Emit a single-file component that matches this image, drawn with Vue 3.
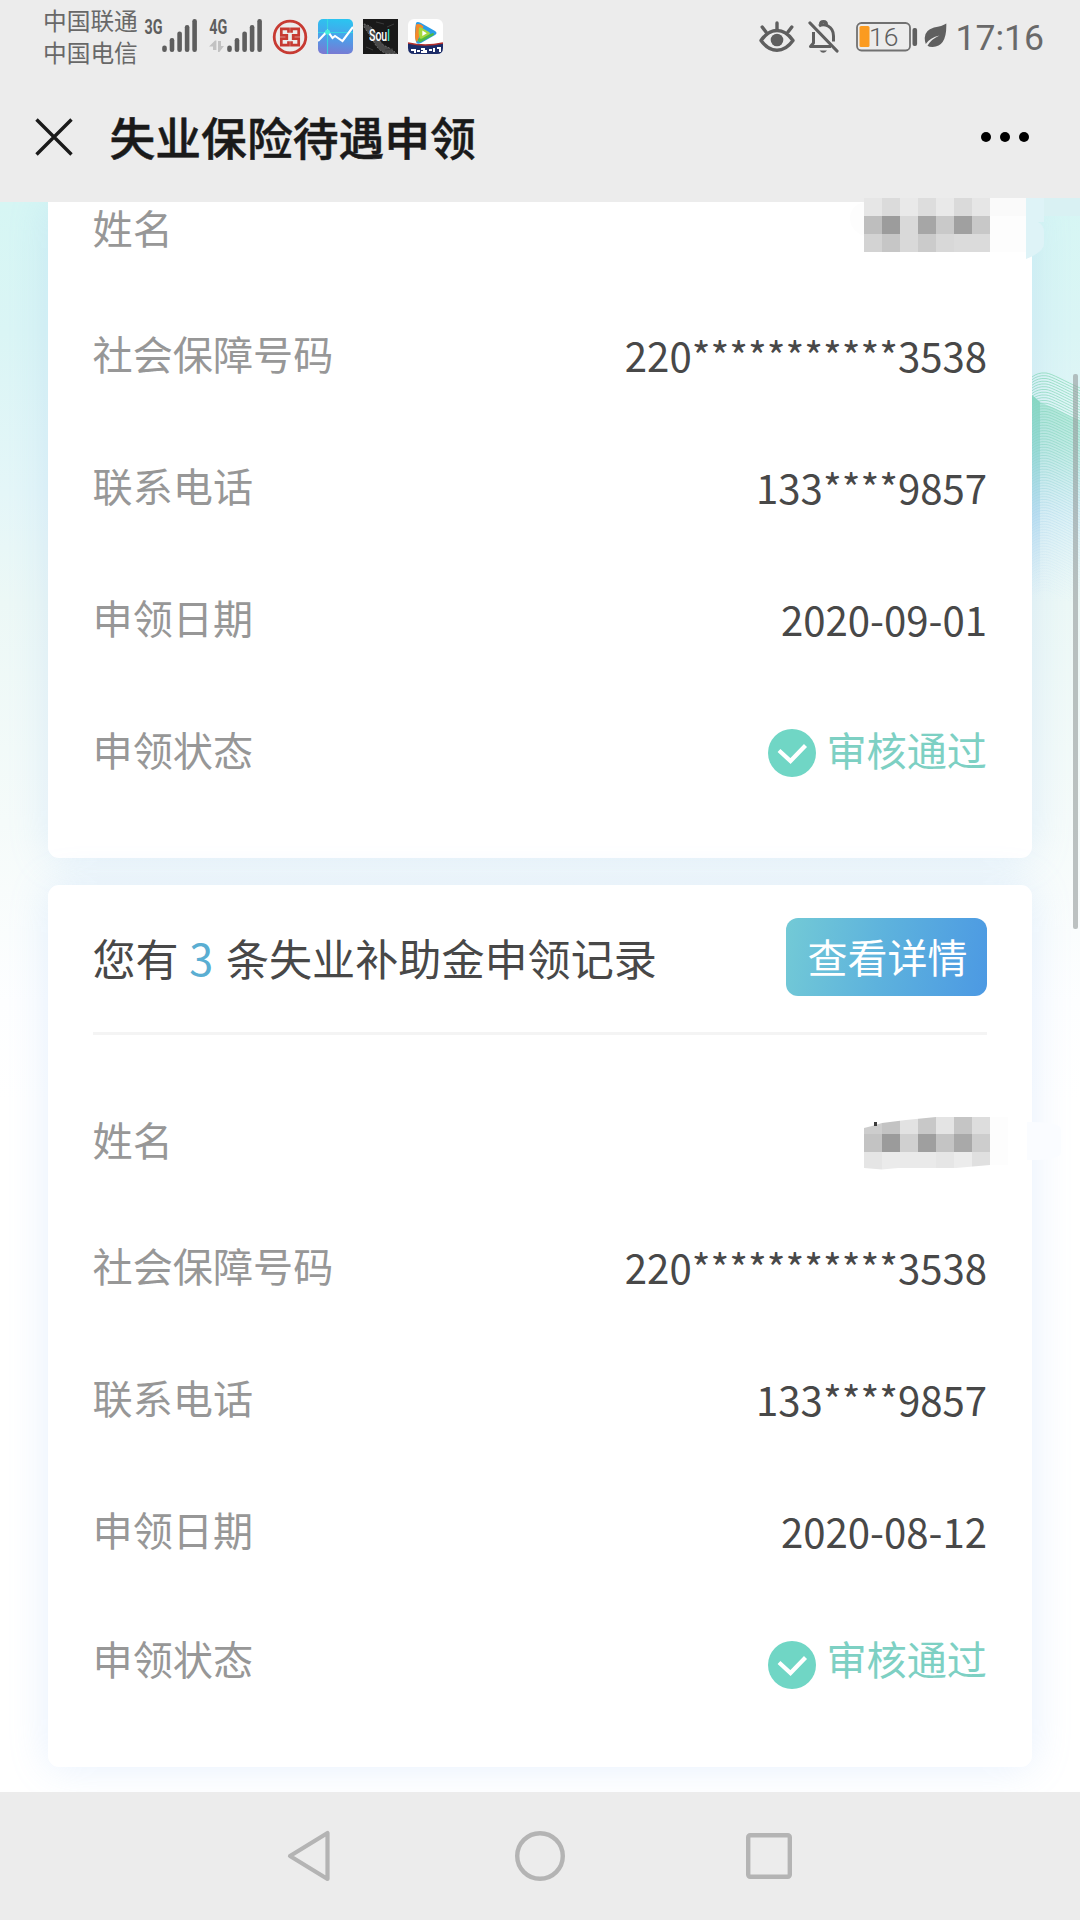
<script setup>
const rows1 = [
  { label: '姓名', kind: 'name' },
  { label: '社会保障号码', value: '220***********3538' },
  { label: '联系电话', value: '133****9857' },
  { label: '申领日期', value: '2020-09-01' },
  { label: '申领状态', kind: 'state', value: '审核通过' },
]
const rows2 = [
  { label: '姓名', kind: 'name' },
  { label: '社会保障号码', value: '220***********3538' },
  { label: '联系电话', value: '133****9857' },
  { label: '申领日期', value: '2020-08-12' },
  { label: '申领状态', kind: 'state', value: '审核通过' },
]
const cards = [
  { id: 'first', rows: rows1 },
  { id: 'second', rows: rows2, count: 3 },
]

const mosaicA = [
  ['#e6e6e6', '#dbdbdb', '#e9e9e9', '#dddddd', '#e9e9e9', '#dadada', '#e6e6e6'],
  ['#bebebe', '#9c9c9c', '#d9d9d9', '#a6a6a6', '#c9c9c9', '#a0a0a0', '#c8c8c8'],
  ['#d3d3d3', '#c6c6c6', '#d9d9d9', '#cbcbcb', '#d8d8d8', '#dbdbdb', '#dbdbdb'],
]
const mosaicB = [
  ['#cdcdcd', '#c3c3c3', '#e2e2e2', '#c8c8c8', '#e4e4e4', '#c5c5c5', '#dddddd'],
  ['#c3c3c3', '#9b9b9b', '#d0d0d0', '#9f9f9f', '#c4c4c4', '#a9a9a9', '#cdcdcd'],
  ['#e5e5e5', '#ebebeb', '#eaeaea', '#eaeaea', '#e6e6e6', '#ececec', '#e0e0e0'],
]

const waves = Array.from({ length: 80 }, (_, i) => {
  const y = 1 + i * 2.75
  return `M0 ${y + 4} C4 ${y + 1} 8 ${y - 0.5} 14 ${y} S34 ${y + 9} 48 ${y + 15}`
})
const bars = [
  { x: 0.2, y: 26.5 },
  { x: 7.7, y: 19 },
  { x: 15.3, y: 12.5 },
  { x: 22.8, y: 6 },
  { x: 30.3, y: 0 },
]
</script>

<template>
  <div class="screen">
    <header class="status">
      <div class="carriers">
        <span>中国联通</span>
        <span>中国电信</span>
      </div>
      <svg class="sig3" width="54" height="36" viewBox="0 0 54 36">
        <text x="0.5" y="14.8" class="net" textLength="18" lengthAdjust="spacingAndGlyphs">3G</text>
        <rect v-for="b in bars" :key="b.x" :x="b.x + 18" :y="b.y" width="4.6" :height="33 - b.y" rx="2.2" fill="#5e5e5e" />
      </svg>
      <svg class="sig4" width="54" height="36" viewBox="0 0 54 36">
        <text x="0.3" y="14.8" class="net" textLength="18" lengthAdjust="spacingAndGlyphs">4G</text>
        <path d="M0 27.500 6 21.500h1.400V31H4v-3.500zM9 22h3v5h3l-4.600 6H9z" fill="#c2c2c2" />
        <rect v-for="b in bars" :key="b.x" :x="b.x + 18" :y="b.y" width="4.6" :height="33 - b.y" rx="2.2" fill="#5e5e5e" />
      </svg>
      <svg class="app bank" width="36" height="36" viewBox="0 0 36 36">
        <circle cx="18" cy="18" r="15.8" fill="none" stroke="#c73a32" stroke-width="2.8" />
        <g fill="none" stroke="#c73a32" stroke-width="2.7">
          <path d="M16.500 13.800V9.800H9.300V16.300H14.800V19.700H9.300V26.200H16.500V22.200" />
          <path d="M19.500 13.800V9.800H26.700V16.300H21.200V19.700H26.700V26.200H19.500V22.200" />
        </g>
      </svg>
      <svg class="app" width="35" height="35" viewBox="0 0 35 35">
        <defs>
          <linearGradient id="stock" x1="0.4" y1="0" x2="0.3" y2="1">
            <stop offset="0" stop-color="#2cc3f0" />
            <stop offset="0.5" stop-color="#4aa0ea" />
            <stop offset="1" stop-color="#7a78d2" />
          </linearGradient>
        </defs>
        <rect width="35" height="35" rx="5" fill="url(#stock)" />
        <path d="M9.500 0v35M0 13.500h35" stroke="#35dfe0" stroke-width="1.200" stroke-opacity="0.8" />
        <path d="M0 22 9.500 12l5 7 2.500-2 7.500 5L35 8" fill="none" stroke="#fff" stroke-width="2.100" />
        <circle cx="9.500" cy="13" r="2.500" fill="#43f0dd" />
      </svg>
      <div class="app soul">
        <svg width="35" height="35" viewBox="0 0 35 35">
          <rect width="35" height="35" fill="#191919" />
          <path d="M1 5q9 2 12 10t9 12q6 2 12 8H24q-8-3-12-10T1 8z" fill="#4a4a4a" stroke="#8a8a8a" stroke-width="0.8" stroke-dasharray="1.500 2" />
          <path d="M13 3l8 2M24 8l7-3M3 28l7 3M22 31l8-1" stroke="#3b3b3b" stroke-width="1" />
        </svg>
        <span>Sou<i>l</i></span>
      </div>
      <svg class="app" width="35" height="35" viewBox="0 0 35 35">
        <rect width="35" height="35" rx="6" fill="#fff" />
        <path d="M0 24q17 4 35 0v5q0 6-6 6H6q-6 0-6-6z" fill="#1c2c68" />
        <path d="M0 24q17 4 35 0" fill="none" stroke="#b4302c" stroke-width="1.600" />
        <path d="M3 31h3M7 30v4M9 32h3M13 30h3v3h-3M18 31v3M21 31h3M26 29v4M29 29h3v4" fill="none" stroke="#fff" stroke-width="2" />
        <path d="M8 4q1-2 5 0l14 8q3 2 0 4l-14 8q-4 2-5-1-2-9 0-19z" fill="#2a9de8" />
        <path d="M8 5.500q4-1.500 7.500 2L9 23q-2-1-2-7z" fill="#f48a2b" />
        <path d="M10 20 25 14q2 1 0 2.500L13 23q-3 1-3-3z" fill="#4fb944" />
        <path d="M11 9q1-1.500 3 0l7 4q2 1.300 0 2.500l-7 4q-2 1-2.600-1Q10 14 11 9z" fill="#a5d83c" />
        <path d="m14.300 11.500 4.500 2.800-4.500 2.800z" fill="#fff" />
      </svg>

      <div class="sys">
        <svg class="eye" width="36" height="34" viewBox="0 0 36 34">
          <path d="M2 20.500Q9 10.500 18 10.500T34 20.500Q27 30.300 18 30.300T2 20.500z" fill="none" stroke="#5f5f5f" stroke-width="3.400" stroke-linejoin="round" />
          <circle cx="18" cy="20" r="6.300" fill="#5f5f5f" />
          <path d="M18 10V3M7 12 3.200 7M29 12l3.800-5" stroke="#5f5f5f" stroke-width="3.400" stroke-linecap="round" />
        </svg>
        <svg class="bell" width="32" height="34" viewBox="0 0 32 34">
          <path d="M2 3 29 31" stroke="#5f5f5f" stroke-width="3.200" stroke-linecap="round" />
          <path d="M5.500 12v11L2.500 26.500H23M11 6q4-2.500 9 0 5.500 3 5.500 10v5.500M12.500 4q0-2.500 3-2.500t3 3" fill="none" stroke="#5f5f5f" stroke-width="3" stroke-linejoin="round" />
          <path d="M11.500 30.500h7.500q-3.700 4.500-7.500 0z" fill="#5f5f5f" />
        </svg>
        <svg class="battery" width="62" height="30" viewBox="0 0 62 30">
          <rect x="1" y="1" width="53" height="27.500" rx="4.500" fill="none" stroke="#717171" stroke-width="1.800" />
          <rect x="3.500" y="4" width="10" height="21" rx="1.500" fill="#fb9b20" />
          <rect x="56.500" y="6" width="4.600" height="18" rx="2" fill="#5f5f5f" />
          <text x="13" y="24" class="pct">16</text>
        </svg>
        <svg class="leaf" width="24" height="26" viewBox="0 0 24 26">
          <path d="M22.300 0.500Q23 24 8.500 24q-3.500 0-5-1.200 4-7 12-10.300Q6 14.500 1.800 21-2.500 8 10 4.500q8-1.200 12.300-4z" fill="#5f5f5f" />
        </svg>
        <span class="time">17:16</span>
      </div>
    </header>

    <div class="titlebar">
      <svg width="38" height="38" viewBox="0 0 38 38">
        <path d="M1.500 1.500 36.500 36.500M36.500 1.500 1.500 36.500" stroke="#1a1a1a" stroke-width="3.400" />
      </svg>
      <h1>失业保险待遇申领</h1>
      <svg class="more" width="50" height="12" viewBox="0 0 50 12">
        <circle cx="6" cy="6" r="5" /><circle cx="25" cy="6" r="5" /><circle cx="44" cy="6" r="5" />
      </svg>
    </div>

    <main class="content">
      <svg class="wave" width="48" height="240" viewBox="0 0 48 240">
        <defs>
          <linearGradient id="lines" x1="0" y1="0" x2="0" y2="240" gradientUnits="userSpaceOnUse">
            <stop offset="0" stop-color="#8cdcb8" stop-opacity="0.9" />
            <stop offset="0.3" stop-color="#86d6c0" stop-opacity="0.65" />
            <stop offset="0.6" stop-color="#a8d6ea" stop-opacity="0.4" />
            <stop offset="1" stop-color="#cfe6f4" stop-opacity="0" />
          </linearGradient>
          <linearGradient id="body" x1="0" y1="20" x2="0" y2="230" gradientUnits="userSpaceOnUse">
            <stop offset="0" stop-color="#86dcbc" stop-opacity="0.55" />
            <stop offset="0.3" stop-color="#8fdac8" stop-opacity="0.36" />
            <stop offset="0.6" stop-color="#b4dcee" stop-opacity="0.2" />
            <stop offset="1" stop-color="#d4e8f6" stop-opacity="0" />
          </linearGradient>
          <linearGradient id="band" x1="0" y1="20" x2="0" y2="225" gradientUnits="userSpaceOnUse">
            <stop offset="0" stop-color="#5fcfa6" stop-opacity="0.5" />
            <stop offset="0.3" stop-color="#6accc0" stop-opacity="0.42" />
            <stop offset="0.6" stop-color="#82c0e6" stop-opacity="0.3" />
            <stop offset="1" stop-color="#b0d4f0" stop-opacity="0" />
          </linearGradient>
        </defs>
        <path d="M0 23 8 30 22 36 40 45 48 48V240H0z" fill="url(#body)" />
        <path d="M0 23 8 30V240H0z" fill="url(#band)" />
        <path v-for="(d, i) in waves" :key="i" :d="d" fill="none" stroke="url(#lines)" stroke-width="0.900" />
      </svg>

      <section v-for="card in cards" :key="card.id" class="card" :class="card.id">
        <div v-if="card.count" class="head">
          <p>您有 <b>{{ card.count }}</b> 条失业补助金申领记录</p>
          <button type="button">查看详情</button>
        </div>
        <div v-for="row in card.rows" :key="row.label" class="row" :class="row.kind">
          <span class="label">{{ row.label }}</span>
          <span v-if="row.kind === 'state'" class="passed">
            <svg width="48" height="48" viewBox="0 0 48 48">
              <circle cx="24" cy="24" r="24" fill="#70d6c5" />
              <path d="M11 21.500 22.500 32 37.500 16.500" fill="none" stroke="#fff" stroke-width="4.200" />
            </svg>
            <span>{{ row.value }}</span>
          </span>
          <span v-else-if="row.value" class="value">{{ row.value }}</span>
        </div>
      </section>

      <div class="scrollbar"></div>
    </main>

    <svg class="mosaic top" width="232" height="74" viewBox="0 0 232 74">
      <path d="M22 10H232V16H20z" fill="#fff" />
      <path d="M178 10H232V28H178z" fill="#d9f1f3" />
      <path d="M142 10H178V64H142z" fill="#fdfdfd" />
      <path d="M142 10H178V28H142z" fill="#fafafa" />
      <path d="M178 10H196V34H190q6 3 6 10v12q0 8-18 15z" fill="#def3f7" />
      <path d="M16 14Q2 18 2 30q0 12 14 18z" fill="#fdfdfd" />
      <g v-for="(line, r) in mosaicA" :key="r">
        <rect v-for="(c, i) in line" :key="i" :x="16 + i * 18" :y="10 + r * 18" width="18" height="18" :fill="c" shape-rendering="crispEdges" />
      </g>
    </svg>
    <svg class="mosaic low" width="232" height="74" viewBox="0 0 232 74">
      <defs>
        <clipPath id="torn"><path d="M16 20 24 18 34 15 58 12 88 9H142V57L108 60 50 60 34 61.500 16 60z" /></clipPath>
      </defs>
      <path d="M184 14q29 0 29 8v22q0 8-29 8z" fill="#fafcff" />
      <path d="M179 14h5v38h-5z" fill="#fafcff" />
      <path d="M142 9H160V57H142z" fill="#fdfdfd" />
      <g clip-path="url(#torn)">
        <g v-for="(line, r) in mosaicB" :key="r">
          <rect v-for="(c, i) in line" :key="i" :x="16 + i * 18" :y="8 + r * 18" width="18" height="18" :fill="c" shape-rendering="crispEdges" />
        </g>
      </g>
      <path d="M26 14h3v4h-3z" fill="#3d3d3d" />
    </svg>

    <nav class="nav">
      <svg width="46" height="54" viewBox="0 0 46 54">
        <path d="M4 27 41.500 4V50z" fill="none" stroke="#b4b4b4" stroke-width="4.200" stroke-linejoin="round" />
      </svg>
      <svg width="54" height="54" viewBox="0 0 54 54">
        <circle cx="27" cy="27" r="22.800" fill="none" stroke="#b4b4b4" stroke-width="4.400" />
      </svg>
      <svg width="50" height="54" viewBox="0 0 50 54">
        <rect x="4.200" y="6.200" width="41.600" height="41.600" rx="2" fill="none" stroke="#b4b4b4" stroke-width="4.400" />
      </svg>
    </nav>
  </div>
</template>

<style>
body {
  background: #fff;
}
</style>

<style scoped>
.screen {
  position: relative;
  display: flex;
  flex-direction: column;
  width: 1080px;
  height: 1920px;
  overflow: hidden;
  font-family: 'Noto Sans CJK SC', 'Noto Sans', sans-serif;
}
svg {
  display: block;
  flex: none;
}
.status {
  display: flex;
  align-items: flex-start;
  height: 76px;
  flex: none;
  padding: 0 36px 0 43px;
  background: #ececec;
}
.carriers {
  display: flex;
  flex-direction: column;
  width: 95px;
  padding-top: 3.500px;
  font-size: 23.700px;
  line-height: 32px;
  color: #686868;
  white-space: nowrap;
}
.net {
  font: 700 21px Roboto, sans-serif;
  fill: #5e5e5e;
}
.sig3,
.sig4 {
  margin-top: 19px;
  overflow: visible;
}
.sig3 {
  margin-left: 6px;
}
.sig4 {
  margin-left: 11px;
}
.app {
  margin: 19px 10px 0 0;
}
.bank {
  margin: 18.500px 9.500px 0 9px;
}
.soul {
  position: relative;
  width: 35px;
  height: 35px;
  flex: none;
}
.soul span {
  position: absolute;
  left: 6.500px;
  top: 6px;
  font: 500 17px/20px Roboto, sans-serif;
  color: #fff;
  transform: scaleX(0.62);
  transform-origin: left;
}
.soul i {
  font-style: normal;
  color: #3ce0cf;
}
.sys {
  display: flex;
  align-items: flex-start;
  margin-left: auto;
}
.eye {
  margin-top: 20px;
}
.bell {
  margin: 20px 0 0 13px;
}
.battery {
  margin: 22px 0 0 16px;
}
.pct {
  font: 300 26.500px Roboto, sans-serif;
  fill: #5f5f5f;
}
.leaf {
  margin: 23px 0 0 6px;
}
.time {
  margin: 15.500px 0 0 7px;
  font: 400 35.600px/44px Roboto, sans-serif;
  color: #696969;
}
.titlebar {
  display: flex;
  align-items: center;
  height: 122px;
  flex: none;
  padding: 0 50px 4px 35px;
  background: #ececec;
}
.titlebar h1 {
  margin: -2px 0 0 36.500px;
  font-size: 45.800px;
  line-height: 60px;
  font-weight: 500;
  -webkit-text-stroke: 0.500px #1a1a1a;
  color: #1a1a1a;
}
.more {
  margin-left: auto;
}
.content {
  position: relative;
  display: flex;
  flex-direction: column;
  gap: 27px;
  height: 1590px;
  flex: none;
  padding: 0 48px;
  overflow: hidden;
  background: linear-gradient(#d6f6f4 0, #daf5f5 130px, #e4f6f8 290px, #ecf8f6 400px, #f5fbfa 620px, #fdfeff 800px, #fff 900px);
}
.wave {
  position: absolute;
  left: 1032px;
  top: 170px;
}
.scrollbar {
  position: absolute;
  right: 2.500px;
  top: 172px;
  width: 4.500px;
  height: 555px;
  border-radius: 2px;
  background: rgba(150, 156, 156, 0.62);
}
.card {
  position: relative;
  display: flex;
  flex-direction: column;
  flex: none;
  padding: 0 45px;
  background: #fff;
  border-radius: 11px;
  box-shadow: 0 0 40px rgba(130, 180, 245, 0.2);
}
.first {
  height: 656px;
  box-sizing: border-box;
  border-radius: 0 0 11px 11px;
}
.second {
  height: 882px;
}
.head {
  display: flex;
  align-items: center;
  justify-content: space-between;
  height: 147px;
  border-bottom: 3px solid #f4f4f4;
}
.head p {
  margin: -3px 0 0 -0.500px;
  font-size: 43.100px;
  line-height: 64px;
  color: #484848;
  white-space: nowrap;
}
.head b {
  margin: 0 3px 0 1px;
  font-weight: 400;
  color: #5aaed2;
}
.head button {
  width: 201px;
  height: 78px;
  margin-top: -3px;
  padding: 0 0 3px 2px;
  border: 0;
  border-radius: 12px;
  font: 40px/72px 'Noto Sans CJK SC', sans-serif;
  color: #fff;
  background: linear-gradient(100deg, #73cad6, #5db2dd 48%, #4c99e3);
}
.row {
  display: flex;
  align-items: center;
  justify-content: space-between;
  box-sizing: border-box;
  height: 132px;
  font-size: 40.150px;
  line-height: 58px;
}
.first .name {
  height: 85px;
  padding-bottom: 35.500px;
}
.second .name {
  height: 163.500px;
  padding-top: 44.500px;
}
.second .state {
  height: 126px;
}
.label {
  margin-left: -0.500px;
  color: #979797;
}
.value {
  padding-top: 3px;
  color: #484848;
}
.second .value {
  padding-top: 4px;
}
.passed {
  display: flex;
  align-items: center;
  gap: 10.500px;
  color: #7dd0c3;
}
.passed svg {
  margin-top: 8px;
}
.second .passed svg {
  margin-top: 14px;
}
.mosaic {
  position: absolute;
  left: 848px;
}
.top {
  top: 188px;
}
.low {
  top: 1108px;
}
.nav {
  display: flex;
  align-items: center;
  flex: 1;
  padding-left: 286px;
  background: #ececec;
}
.nav svg + svg {
  margin-left: 181px;
}
.nav svg:last-child {
  margin-left: 177px;
}
</style>
